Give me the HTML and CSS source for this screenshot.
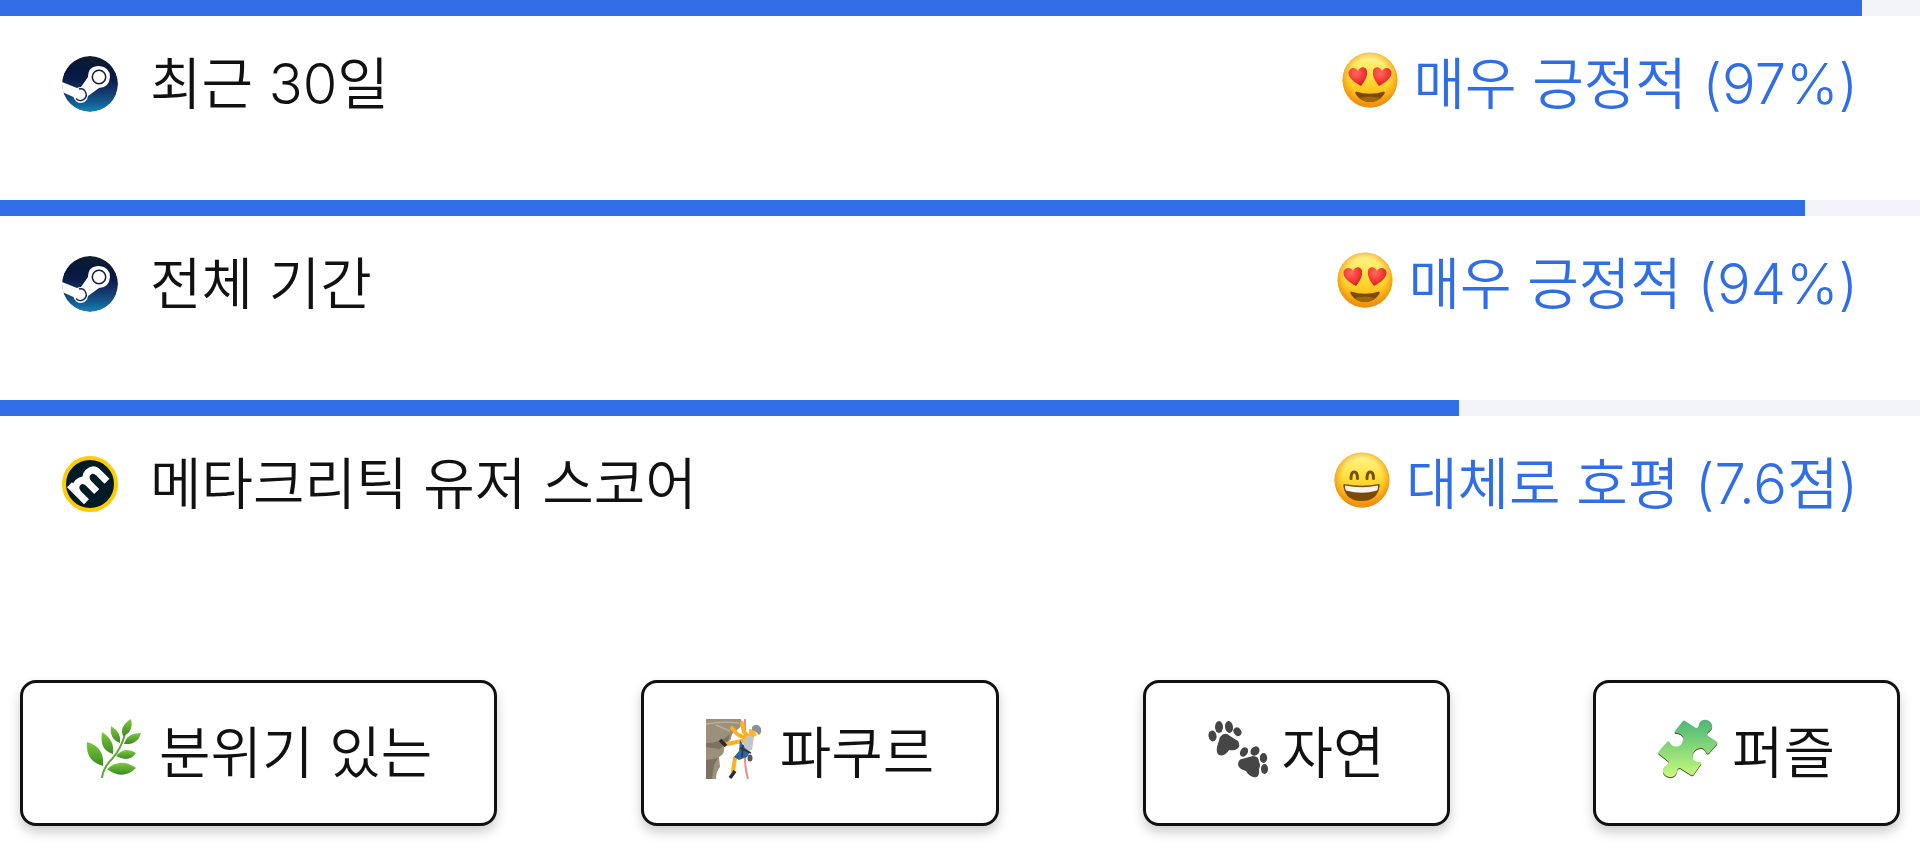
FILE: index.html
```html
<!DOCTYPE html>
<html lang="ko">
<head>
  <meta charset="UTF-8">
  <meta name="viewport" content="width=device-width, initial-scale=1.0">
  <title>게임 평가</title>
  <link rel="stylesheet" href="styles.css">
</head>
<body>
  <!-- 공용 아이콘 -->
  <svg class="defs" width="0" height="0" aria-hidden="true">
    <defs>
      <linearGradient id="steam-bg" x1="0" y1="0" x2="0" y2="1">
        <stop offset="0" stop-color="#111d2e"/>
        <stop offset=".21" stop-color="#051839"/>
        <stop offset=".41" stop-color="#0a1b48"/>
        <stop offset=".58" stop-color="#132e62"/>
        <stop offset=".74" stop-color="#144b7e"/>
        <stop offset=".87" stop-color="#136497"/>
        <stop offset="1" stop-color="#1387b8"/>
      </linearGradient>
      <linearGradient id="face" x1="0" y1="0" x2="0" y2="1">
        <stop offset="0" stop-color="#fff79a"/>
        <stop offset=".45" stop-color="#ffe03a"/>
        <stop offset=".75" stop-color="#fdc01c"/>
        <stop offset="1" stop-color="#e98a0b"/>
      </linearGradient>
      <radialGradient id="face-edge" cx=".5" cy=".46" r=".54">
        <stop offset=".65" stop-color="#f9a00f" stop-opacity="0"/>
        <stop offset="1" stop-color="#ef8d10"/>
      </radialGradient>
      <radialGradient id="heart" cx=".4" cy=".3" r=".7">
        <stop offset="0" stop-color="#ff6a62"/>
        <stop offset=".6" stop-color="#f23a37"/>
        <stop offset="1" stop-color="#d32222"/>
      </radialGradient>
      <clipPath id="steam-clip"><circle cx="28" cy="28" r="28"/></clipPath>
      <symbol id="steam" viewBox="0 0 56 56">
        <g clip-path="url(#steam-clip)">
          <circle cx="28" cy="28" r="28" fill="url(#steam-bg)"/>
          <path fill="#fff" d="M0 26 L15 32 Q17 31 19 31 L26 21 Q26 10 37 10 Q48 11 48 21 Q47 32 37 32 L26 40 Q25 47 18.500 47 Q13 46.500 11.500 41 L0 36 Z"/>
          <circle cx="37" cy="21" r="6.700" fill="none" stroke="#0a1b48" stroke-width="1.500"/>
          <path fill="none" stroke="#11295b" stroke-width="1.400" d="M17 33 A5.800 5.800 0 1 1 14 42.500"/>
        </g>
      </symbol>
      <symbol id="love" viewBox="0 0 60 60">
        <circle cx="30" cy="30" r="27.500" fill="url(#face)"/>
        <circle cx="30" cy="30" r="27.500" fill="url(#face-edge)"/>
        <path fill="url(#heart)" d="M21 36 C14 32 8 28 8.500 22 C10 17 16 17 18 21 C20 16 26 16 27 21 C28 27 24 32 21 36 Z"/>
        <path fill="url(#heart)" d="M39 36 C46 32 52 28 51.500 22 C50 17 44 17 42 21 C40 16 34 16 33 21 C32 27 36 32 39 36 Z"/>
        <path fill="#7b4a06" d="M16 41.500 Q30 46 44 41.500 Q45.500 42 44 44.500 Q39 52 30 52 Q21 52 16 44.500 Q14.500 42 16 41.500 Z"/>
        <path fill="#a0670c" d="M20 48 Q30 45 40 48 Q36 52 30 52 Q24 52 20 48 Z"/>
      </symbol>
      <symbol id="smile" viewBox="0 0 60 60">
        <circle cx="30" cy="30" r="27.500" fill="url(#face)"/>
        <circle cx="30" cy="30" r="27.500" fill="url(#face-edge)"/>
        <path fill="none" stroke="#7a4d08" stroke-width="3" stroke-linecap="round" d="M19 28.500 Q19 22 22.200 22 Q25.500 22 25.500 28.500 M35 28.500 Q35 22 38.200 22 Q41.500 22 41.500 28.500"/>
        <path fill="#7b4a06" d="M12 34 Q30 37.500 47 34 Q48 34 47.500 37 Q45 51 29.500 51 Q14 51 11.500 37 Q11 34 12 34 Z"/>
        <path fill="#f4f4f4" d="M13 35.500 Q30 39 46 35.500 Q46.500 38 45 40.500 Q30 45 14 40.500 Q12.500 38 13 35.500 Z"/>
      </symbol>
    </defs>
  </svg>

  <ul class="scores">
    <li class="score">
      <div class="bar"><div class="fill" style="width: 97%"></div></div>
      <div class="row">
        <svg class="logo" aria-hidden="true"><use href="#steam"/></svg>
        <span class="name">최근 30일</span>
        <span class="result"><svg class="emoji" aria-hidden="true"><use href="#love"/></svg>매우 긍정적 (97%)</span>
      </div>
    </li>
    <li class="score">
      <div class="bar"><div class="fill" style="width: 94%"></div></div>
      <div class="row">
        <svg class="logo" aria-hidden="true"><use href="#steam"/></svg>
        <span class="name">전체 기간</span>
        <span class="result"><svg class="emoji" aria-hidden="true"><use href="#love"/></svg>매우 긍정적 (94%)</span>
      </div>
    </li>
    <li class="score">
      <div class="bar"><div class="fill" style="width: 76%"></div></div>
      <div class="row">
        <svg class="logo" viewBox="0 0 56 56" aria-hidden="true">
          <circle cx="28" cy="28" r="26" fill="#001b26" stroke="#fc0" stroke-width="4"/>
          <path transform="rotate(-45 28 28)" fill="none" stroke="#fff" stroke-width="7" d="M13 38 V14 M13 26 Q14 18.500 20.500 18.500 Q27.500 18.500 27.500 26 V38 M27.500 26 Q28.500 18.500 35 18.500 Q42 18.500 42 26 V38"/>
        </svg>
        <span class="name">메타크리틱 유저 스코어</span>
        <span class="result"><svg class="emoji" aria-hidden="true"><use href="#smile"/></svg>대체로 호평 (7.6점)</span>
      </div>
    </li>
  </ul>

  <div class="tags">
    <button type="button" class="tag">
      <svg class="emoji" viewBox="0 0 60 60" aria-hidden="true">
        <defs>
          <linearGradient id="leaf" x1="0" y1="0" x2="0" y2="1">
            <stop offset="0" stop-color="#7ccb3c"/>
            <stop offset="1" stop-color="#3c8a22"/>
          </linearGradient>
        </defs>
        <path fill="none" stroke="#62a838" stroke-width="2" d="M17 59 Q18 49 27 40 Q36 30 40 15"/>
        <g fill="url(#leaf)">
          <path d="M2 23 Q20 28 18 47 Q0 42 2 23 Z"/>
          <path d="M17 13 Q30 21 28 35 Q14 31 17 13 Z"/>
          <path d="M26 7 Q37 14 35 24 Q24 20 26 7 Z"/>
          <path d="M46 0 Q49 13 38 17 Q34 7 46 0 Z"/>
          <path d="M56 14 Q53 26 39 25 Q42 14 56 14 Z"/>
          <path d="M51 34 Q44 44 31 37 Q40 27 51 34 Z"/>
          <path d="M51 49 Q38 62 22 50 Q36 38 51 49 Z"/>
        </g>
      </svg>분위기 있는
    </button>
    <button type="button" class="tag">
      <svg class="emoji" viewBox="0 0 60 60" aria-hidden="true">
        <path fill="#9c907b" d="M0 0 H35 Q37 7 31 11 Q25 14 25 20 L18 28 Q19 35 13 38 L14 48 Q10 52 10 60 H0 Z"/>
        <path fill="#7d725f" d="M0 24 Q15 24 24 15 L22 22 L14 30 L0 28 Z M0 41 L12 39 L8 46 L6 60 H0 Z"/>
        <path fill="none" stroke="#b9ae9a" stroke-width="1.500" d="M0 5 Q16 2 33 4 M10 6 L24 12"/>
        <path fill="none" stroke="#ec8a92" stroke-width="2" d="M39 0 V40 Q39 50 42 60"/>
        <path fill="none" stroke="#fdb022" stroke-width="4" stroke-linecap="round" stroke-linejoin="round" d="M26 9 L31 15 L41 20 M36 4 L38 13 L44 19 M36 22 L21 25 M29 39 L27 52"/>
        <path fill="#fdb722" d="M43 10 Q48 9 51 16 L46 19 Q42 17 43 10 Z"/>
        <path fill="#c3c5c8" d="M42 16 L48 18 L46 31 L38 33 L37 22 Z"/>
        <path fill="#2b65a5" d="M34 21 L39 29 L44 33 L41 38 L33 41 L28 38 L33 32 Z"/>
        <path fill="none" stroke="#303238" stroke-width="1.500" d="M34 29 L45 34 M37 26 L36 38"/>
        <ellipse cx="44" cy="39" rx="2.500" ry="3.500" fill="#54565a"/>
        <path fill="#8c9195" d="M46 8 Q51 3 55 9 Q56 14 53 16 Q50 12 46 11 Z"/>
        <path fill="none" stroke="#292b31" stroke-width="3.500" d="M14 21 L20 27 M24 59 L29 52"/>
      </svg>파쿠르
    </button>
    <button type="button" class="tag">
      <svg class="emoji" viewBox="0 0 60 60" aria-hidden="true">
        <g fill="#464646">
          <ellipse cx="4.500" cy="17" rx="4" ry="5.500" transform="rotate(-10 4 17)"/>
          <ellipse cx="11" cy="8" rx="4" ry="6"/>
          <ellipse cx="21" cy="8" rx="4" ry="6" transform="rotate(-8 21 8)"/>
          <ellipse cx="29.500" cy="13" rx="3.700" ry="4.500" transform="rotate(-35 29 13)"/>
          <path d="M12 18 Q17 12 22 17 L30 22 Q33 27 29 30 Q26 32 21 31 Q17 38 11 36 Q8 34 9 28 Z"/>
          <ellipse cx="36" cy="33" rx="3.700" ry="5" transform="rotate(35 36 33)"/>
          <ellipse cx="47" cy="32" rx="4.200" ry="5" transform="rotate(40 47 32)"/>
          <ellipse cx="55.500" cy="39" rx="3.700" ry="5"/>
          <ellipse cx="56.500" cy="50" rx="3.500" ry="5"/>
          <path d="M34 40 Q41 38 45 37 Q51 37 51 43 Q53 46 51 50 Q52 60 45 58 Q40 56 38 52 Q30 50 30 45 Q31 40 34 40 Z"/>
        </g>
      </svg>자연
    </button>
    <button type="button" class="tag">
      <svg class="emoji" viewBox="0 0 60 60" aria-hidden="true">
        <defs>
          <linearGradient id="puzzle" x1="0" y1="0" x2="0" y2="1">
            <stop offset="0" stop-color="#4db578"/>
            <stop offset="1" stop-color="#c6fa7c"/>
          </linearGradient>
          <path id="piece" d="M25 2 Q26 1 27 2 L38 9 Q41 9 41 5 Q43 0 49 1 Q55 3 54 9 Q52 12 50 13 Q48 15 50 17 L58 22 Q60 23 59 25 L51 34 Q49 36 48 33 Q45 27 39 30 Q33 34 35 40 Q37 43 42 43 Q44 43 43 45 L36 55 Q35 57 33 56 L22 49 Q19 49 19 53 Q17 59 11 58 Q4 56 5 50 Q6 47 9 46 Q12 44 10 42 L1 35 Q0 34 1 32 L9 23 Q11 21 12 24 Q15 29 21 27 Q26 24 25 18 Q23 14 18 14 Q16 14 17 12 Z"/>
        </defs>
        <use href="#piece" y="1" fill="#3f4a22"/>
        <use href="#piece" fill="url(#puzzle)"/>
      </svg>퍼즐
    </button>
  </div>
</body>
</html>
```
FILE: styles.css
```css
body {
  margin: 0;
  background: #fff;
  color: #111;
  font-family: Inter, "Noto Sans CJK KR", sans-serif;
  font-size: 56px;
  font-weight: 350;
  line-height: 72px;
}

.defs {
  position: absolute;
}

.scores {
  margin: 0;
  padding: 0;
  list-style: none;
}

.score {
  padding-bottom: 48px;
}

.bar {
  height: 16px;
  background: #f2f4f9;
}

.bar .fill {
  height: 100%;
  background: #306ee8;
}

.row {
  display: flex;
  align-items: center;
  padding: 32px 62px;
}

.logo {
  width: 56px;
  height: 56px;
  margin-right: 32px;
}

.result {
  display: flex;
  align-items: center;
  margin-left: auto;
  color: #306ee8;
}

.emoji {
  width: 60px;
  height: 60px;
  margin: 0 14px 8px 0;
}

.tags {
  display: flex;
  justify-content: space-between;
  padding: 80px 20px 20px;
}

.tag {
  display: flex;
  align-items: center;
  padding: 34px 62px;
  border: 3px solid #111;
  border-radius: 16px;
  background: #fff;
  box-shadow: 0 6px 12px rgba(0, 0, 0, 0.2);
  color: inherit;
  font: inherit;
  cursor: pointer;
}
```
